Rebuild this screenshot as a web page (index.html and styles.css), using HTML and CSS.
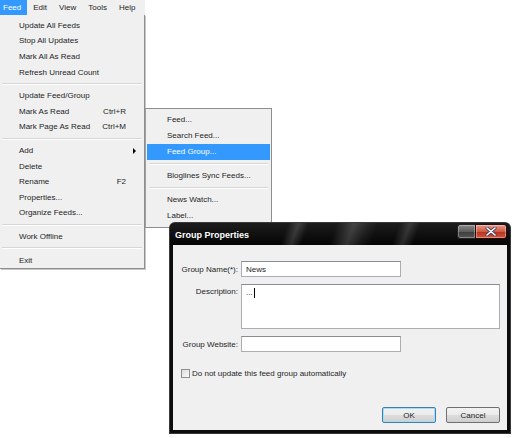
FILE: index.html
```html
<!DOCTYPE html>
<html>
<head>
<meta charset="utf-8">
<link rel="stylesheet" href="styles.css">
</head>
<body>
<div class="screen">
  <div class="menubar">
    <span class="mb-item active first">Feed</span>
    <span class="mb-item">Edit</span>
    <span class="mb-item">View</span>
    <span class="mb-item">Tools</span>
    <span class="mb-item">Help</span>
  </div>

  <div class="dropdown">
    <div class="mi">Update All Feeds</div>
    <div class="mi">Stop All Updates</div>
    <div class="mi">Mark All As Read</div>
    <div class="mi">Refresh Unread Count</div>
    <div class="sep"></div>
    <div class="mi">Update Feed/Group</div>
    <div class="mi"><span>Mark As Read</span><span class="key">Ctrl+R</span></div>
    <div class="mi"><span>Mark Page As Read</span><span class="key">Ctrl+M</span></div>
    <div class="sep"></div>
    <div class="mi"><span>Add</span><span class="arrow"></span></div>
    <div class="mi">Delete</div>
    <div class="mi"><span>Rename</span><span class="key">F2</span></div>
    <div class="mi">Properties...</div>
    <div class="mi">Organize Feeds...</div>
    <div class="sep"></div>
    <div class="mi">Work Offline</div>
    <div class="sep"></div>
    <div class="mi">Exit</div>
  </div>

  <div class="submenu">
    <div class="si">Feed...</div>
    <div class="si">Search Feed...</div>
    <div class="si hl">Feed Group...</div>
    <div class="sep"></div>
    <div class="si">Bloglines Sync Feeds...</div>
    <div class="sep"></div>
    <div class="si">News Watch...</div>
    <div class="si">Label...</div>
  </div>

  <div class="dialog">
    <div class="titlebar">
      <span class="title">Group Properties</span>
      <div class="tb-buttons">
        <span class="tb-min"></span>
        <span class="tb-close"><svg width="12" height="9" viewBox="0 0 12 9"><path d="M2 1 L10 8 M10 1 L2 8" stroke="#3a3a5a" stroke-width="3" stroke-linecap="round"/><path d="M2 1 L10 8 M10 1 L2 8" stroke="#ffffff" stroke-width="1.6" stroke-linecap="round"/></svg></span>
      </div>
    </div>
    <div class="body">
      <div class="form">
        <label class="lbl">Group Name(*):</label>
        <div class="field short">News</div>
        <label class="lbl top">Description:</label>
        <div class="field area">...<span class="caret"></span></div>
        <label class="lbl">Group Website:</label>
        <div class="field short"></div>
      </div>
      <div class="check"><span class="box"></span><span>Do not update this feed group automatically</span></div>
      <div class="buttons">
        <span class="btn default">OK</span>
        <span class="btn">Cancel</span>
      </div>
    </div>
  </div>
</div>
</body>
</html>
```

FILE: styles.css
```css
* { box-sizing: border-box; }
html, body { margin: 0; padding: 0; background: #ffffff; }
body {
  font-family: "Liberation Sans", Arial, sans-serif;
  font-size: 8px;
  color: #1e1e1e;
}
.screen { position: relative; width: 512px; height: 438px; overflow: hidden; }

.menubar {
  display: flex;
  width: 145px;
  height: 15px;
  background: #f0f0f0;
  align-items: stretch;
}
.mb-item {
  display: flex;
  align-items: center;
  padding: 0 6px;
  line-height: 1;
}
.mb-item.first { padding-left: 3px; }
.mb-item.active { background: #3399ff; color: #fff; }

.dropdown {
  position: absolute;
  left: 0;
  top: 15px;
  width: 145px;
  padding: 2.6px 0 0 0;
  background: #f0f0f0;
  border-right: 1px solid #8e8e8e;
  border-bottom: 1px solid #8e8e8e;
  box-shadow: 1px 1px 0 #c8c8c8;
}
.mi {
  height: 15.6px;
  display: flex;
  align-items: center;
  justify-content: space-between;
  padding: 0 18px 0 19px;
}
.mi .key { width: 26px; text-align: right; }
.mi .arrow {
  width: 0; height: 0;
  margin-right: -10px;
  border-left: 3px solid #000;
  border-top: 3px solid transparent;
  border-bottom: 3px solid transparent;
}
.sep {
  height: 8px;
  display: flex;
  align-items: center;
  padding: 0 2px;
}
.sep::before {
  content: "";
  display: block;
  width: 100%;
  height: 1px;
  background: #d7d7d7;
  border-bottom: 1px solid #ffffff;
  box-sizing: content-box;
}

.submenu {
  position: absolute;
  left: 145px;
  top: 108px;
  width: 127px;
  padding: 2.5px 1px 3px;
  background: #f0f0f0;
  border: 1px solid #8e8e8e;
  border-left-color: #a0a0a0;
}
.si {
  height: 16px;
  display: flex;
  align-items: center;
  padding-left: 20px;
}
.si.hl { background: #3399ff; color: #fff; }

.dialog {
  position: absolute;
  left: 170px;
  top: 223px;
  width: 340px;
  height: 210px;
  display: flex;
  flex-direction: column;
  background: #0c0c0c;
  border-radius: 5px 5px 0 0;
  box-shadow: 0 0 0 1px #3a3a3a;
}
.titlebar {
  height: 22px;
  flex: none;
  display: flex;
  align-items: flex-start;
  justify-content: space-between;
  border-radius: 5px 5px 0 0;
  background:
    linear-gradient(110deg, rgba(255,255,255,0) 0%, rgba(255,255,255,0) 34%, rgba(255,255,255,0.16) 37%, rgba(255,255,255,0) 40%, rgba(255,255,255,0) 48%, rgba(255,255,255,0.18) 53%, rgba(255,255,255,0.06) 57%, rgba(255,255,255,0) 60%, rgba(255,255,255,0) 66%, rgba(255,255,255,0.14) 69%, rgba(255,255,255,0) 72%, rgba(255,255,255,0) 100%),
    linear-gradient(#1c1c1c, #050505);
  color: #fff;
}
.title {
  font-weight: bold;
  font-size: 9px;
  padding: 7px 0 0 5px;
}
.tb-buttons {
  display: flex;
  margin-right: 3px;
  margin-top: 1px;
}
.tb-min {
  width: 18px;
  height: 15px;
  border: 1px solid #222;
  border-right: none;
  border-radius: 3px 0 0 3px;
  background: linear-gradient(#8a8a8a, #5e5e5e 50%, #3c3c3c 51%, #555);
  box-shadow: inset 0 0 0 1px rgba(255,255,255,0.3);
}
.tb-close {
  width: 32px;
  height: 15px;
  display: flex;
  align-items: center;
  justify-content: center;
  border: 1px solid #2a0a08;
  border-radius: 0 3px 3px 0;
  background: linear-gradient(#e59a8c, #cf5b45 50%, #b9301c 51%, #d2553c);
  box-shadow: inset 0 0 0 1px rgba(255,255,255,0.35);
}
.body {
  flex: 1;
  margin: 0 3px 3px 3px;
  background: #f0f0f0;
  display: flex;
  flex-direction: column;
  padding: 16px 7px 7px 0;
}
.form {
  display: grid;
  grid-template-columns: 65px 259px;
  column-gap: 3px;
  row-gap: 7px;
}
.lbl {
  text-align: right;
  align-self: center;
}
.lbl.top { align-self: start; padding-top: 3px; }
.field {
  background: #fff;
  border: 1px solid #abadb3;
  border-top-color: #8a8d96;
  height: 16px;
  padding: 0 4px;
  display: flex;
  align-items: center;
}
.field.short { width: 160px; }
.field.area { height: 45px; align-items: flex-start; padding-top: 3px; }
.caret {
  display: inline-block;
  width: 1px;
  height: 10px;
  background: #000;
  margin-left: 1px;
}
.check {
  display: flex;
  align-items: center;
  margin: 17px 0 0 8px;
}
.check .box {
  width: 9px;
  height: 9px;
  border: 1px solid #8f8f8f;
  background: linear-gradient(135deg, #dcdcdc, #fbfbfb);
  margin-right: 2px;
}
.buttons {
  margin-top: auto;
  display: flex;
  justify-content: flex-end;
  gap: 10px;
}
.btn {
  width: 54px;
  height: 16px;
  display: flex;
  align-items: center;
  justify-content: center;
  border: 1px solid #707070;
  border-radius: 2px;
  background: linear-gradient(#f2f2f2, #ebebeb 50%, #dddddd 51%, #cfcfcf);
}
.btn.default {
  border-color: #3c7fb1;
  box-shadow: inset 0 0 0 1px #a6dcf4;
}
```
